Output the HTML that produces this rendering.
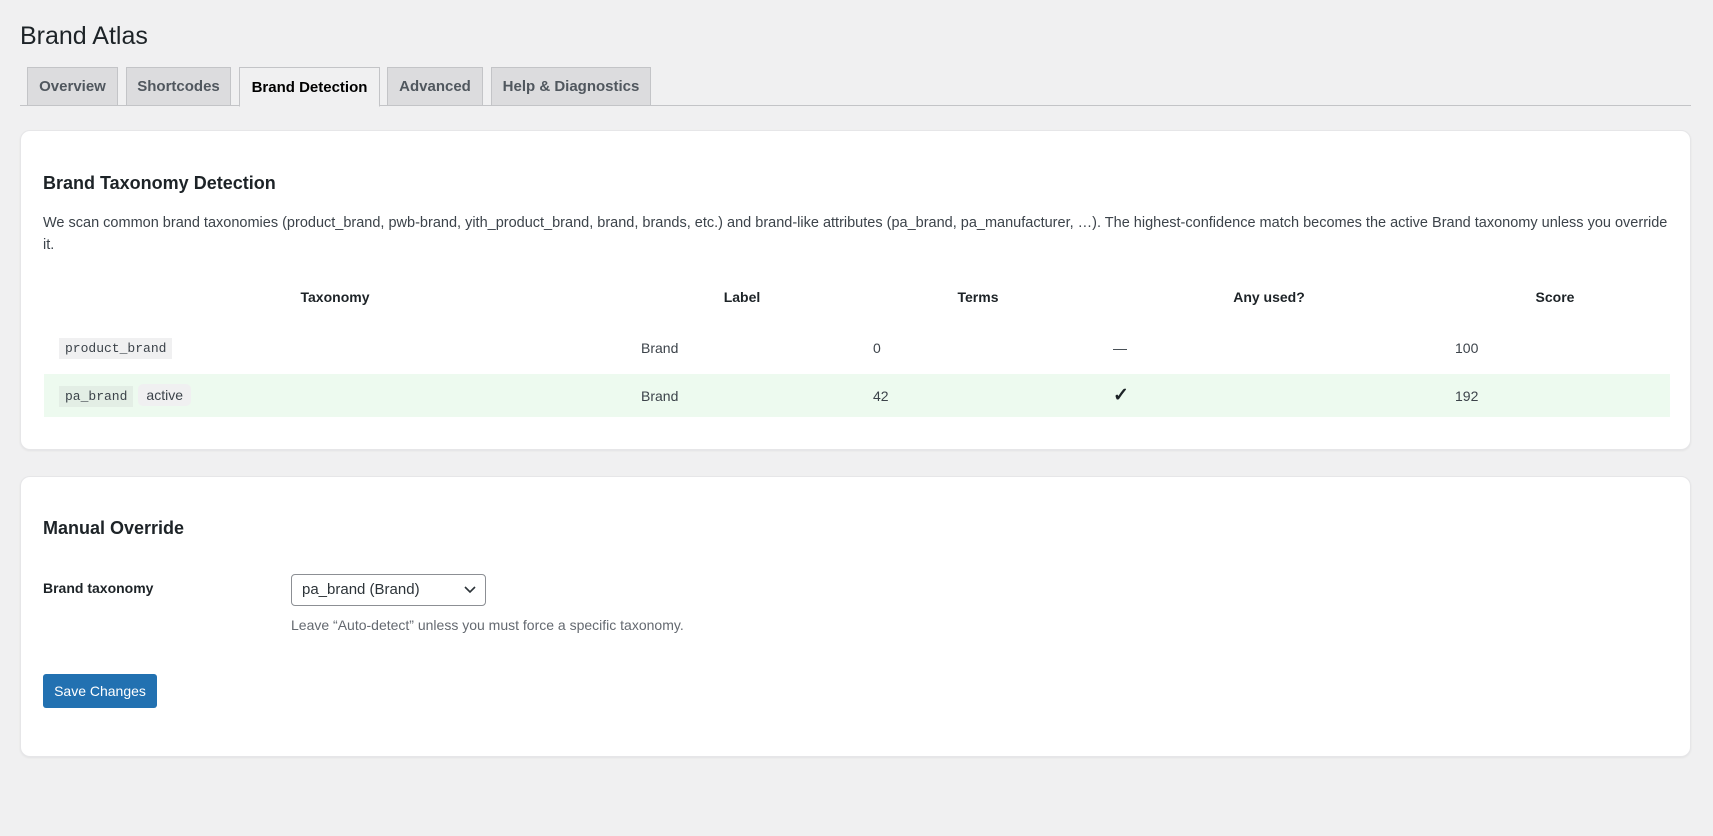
<!DOCTYPE html>
<html><head><meta charset="utf-8"><style>
*{box-sizing:border-box;margin:0;padding:0}
body{width:1713px;height:836px;background:#f0f0f1;font-family:"Liberation Sans",sans-serif;font-size:14px;color:#3c434a;position:relative;overflow:hidden}
.abs{position:absolute}
h1{position:absolute;left:20px;top:20px;font-size:25px;font-weight:400;color:#1d2327;line-height:32px}
.tabline{position:absolute;left:20px;width:1671px;top:105px;border-top:1px solid #c3c4c7}
.tab{position:absolute;top:67px;height:39px;background:#dcdcde;border:1px solid #c3c4c7;font-weight:700;font-size:15px;color:#50575e;display:flex;align-items:center;justify-content:center}
.tab.act{background:#f0f0f1;border-bottom-color:#f0f0f1;color:#000;height:40px}
.card{position:absolute;left:20px;width:1671px;background:#fff;border-radius:10px;box-shadow:0 1px 2px rgba(0,0,0,.06);border:1px solid #e6e6e8}
h2{position:absolute;font-size:18px;font-weight:700;color:#1d2327}
table{position:absolute;left:23px;top:142px;width:1626px;border-collapse:collapse}
th{font-weight:700;color:#1d2327;height:48px;font-size:14px}
td{padding:0 15px}
code{font-family:"Liberation Mono",monospace;font-size:13px;background:#f0f0f1;padding:3px 6px;color:#3c434a}
.pill{background:#f0f0f1;border-radius:5px;padding:3px 8px;margin-left:5px}
tr.g td{background:#edfaef}
</style></head><body>
<h1>Brand Atlas</h1>
<div class="tabline"></div>
<div class="tab" style="left:27px;width:91px">Overview</div>
<div class="tab" style="left:126px;width:105px">Shortcodes</div>
<div class="tab act" style="left:239px;width:141px">Brand Detection</div>
<div class="tab" style="left:387px;width:96px">Advanced</div>
<div class="tab" style="left:491px;width:160px">Help &amp; Diagnostics</div>

<div class="card" style="top:130px;height:320px">
<h2 style="left:22px;top:42px">Brand Taxonomy Detection</h2>
<div class="abs" style="left:22px;top:81px;width:1640px;line-height:22px;font-size:14.5px">We scan common brand taxonomies (product_brand, pwb-brand, yith_product_brand, brand, brands, etc.) and brand-like attributes (pa_brand, pa_manufacturer, …). The highest-confidence match becomes the active Brand taxonomy unless you override<br>it.</div>
<table>
<colgroup><col style="width:582px"><col style="width:232px"><col style="width:240px"><col style="width:342px"><col style="width:230px"></colgroup>
<tr><th>Taxonomy</th><th>Label</th><th>Terms</th><th>Any used?</th><th>Score</th></tr>
<tr style="height:53px"><td><code>product_brand</code></td><td>Brand</td><td>0</td><td>—</td><td>100</td></tr>
<tr class="g" style="height:43px"><td><code style="background:#e3eee5">pa_brand</code><span class="pill">active</span></td><td>Brand</td><td>42</td><td style="font-size:19px;font-weight:700;color:#1d2327">✓</td><td>192</td></tr>
</table>
</div>

<div class="card" style="top:476px;height:281px">
<h2 style="left:22px;top:41px">Manual Override</h2>
<div class="abs" style="left:22px;top:103px;font-weight:700;color:#1d2327">Brand taxonomy</div>
<div class="abs" style="left:270px;top:97px;width:195px;height:32px;border:1px solid #8c8f94;border-radius:4px;font-size:15px;color:#2c3338;padding:6px 10px">pa_brand (Brand)
<svg class="abs" style="right:9px;top:11px" width="12" height="8" viewBox="0 0 12 8"><path d="M1 1l5 5 5-5" fill="none" stroke="#2c3338" stroke-width="1.6"/></svg></div>
<div class="abs" style="left:270px;top:140px;color:#646970;font-size:14px">Leave “Auto-detect” unless you must force a specific taxonomy.</div>
<div class="abs" style="left:22px;top:197px;width:114px;height:34px;background:#2271b1;border-radius:3px;color:#fff;font-size:14px;display:flex;align-items:center;justify-content:center">Save Changes</div>
</div>
</body></html>
